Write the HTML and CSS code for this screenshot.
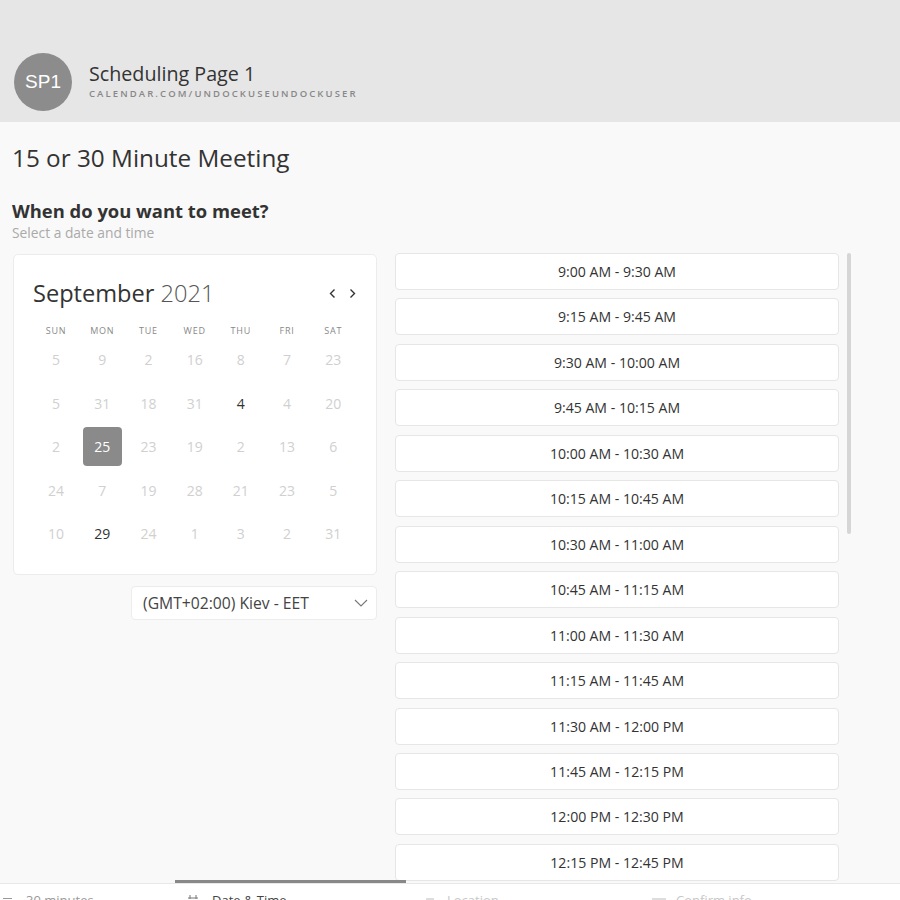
FILE: index.html
```html
<!DOCTYPE html>
<html>
<head>
<meta charset="utf-8">
<link rel="stylesheet" href="styles.css">
</head>
<body>
<div class="page">
  <header class="top">
    <div class="avatar">SP1</div>
    <div class="top-text">
      <div class="page-name">Scheduling Page 1</div>
      <div class="page-url">CALENDAR.COM/UNDOCKUSEUNDOCKUSER</div>
    </div>
  </header>
  <main class="main">
    <h1 class="title">15 or 30 Minute Meeting</h1>
    <h2 class="question">When do you want to meet?</h2>
    <div class="hint">Select a date and time</div>
    <div class="content">
      <div class="left">
        <div class="cal">
          <div class="cal-head">
            <div class="month">September <span class="year">2021</span></div>
            <div class="arrows">
              <svg width="9" height="11" viewBox="0 0 9 11"><path d="M6.5 1.5 L2.5 5.5 L6.5 9.5" fill="none" stroke="#333" stroke-width="1.4"/></svg>
              <svg width="9" height="11" viewBox="0 0 9 11"><path d="M2.5 1.5 L6.5 5.5 L2.5 9.5" fill="none" stroke="#333" stroke-width="1.4"/></svg>
            </div>
          </div>
          <div class="grid">
            <div class="wd">SUN</div><div class="wd">MON</div><div class="wd">TUE</div><div class="wd">WED</div><div class="wd">THU</div><div class="wd">FRI</div><div class="wd">SAT</div>
            <div class="d">5</div><div class="d">9</div><div class="d">2</div><div class="d">16</div><div class="d">8</div><div class="d">7</div><div class="d">23</div>
            <div class="d">5</div><div class="d">31</div><div class="d">18</div><div class="d">31</div><div class="d on">4</div><div class="d">4</div><div class="d">20</div>
            <div class="d">2</div><div class="d"><span class="sel">25</span></div><div class="d">23</div><div class="d">19</div><div class="d">2</div><div class="d">13</div><div class="d">6</div>
            <div class="d">24</div><div class="d">7</div><div class="d">19</div><div class="d">28</div><div class="d">21</div><div class="d">23</div><div class="d">5</div>
            <div class="d">10</div><div class="d on">29</div><div class="d">24</div><div class="d">1</div><div class="d">3</div><div class="d">2</div><div class="d">31</div>
          </div>
        </div>
        <div class="tz">
          <span>(GMT+02:00) Kiev - EET</span>
          <svg width="14" height="8" viewBox="0 0 14 8"><path d="M1 1 L7 7 L13 1" fill="none" stroke="#777" stroke-width="1.1"/></svg>
        </div>
      </div>
      <div class="slots">
        <div class="slot">9:00 AM - 9:30 AM</div>
        <div class="slot">9:15 AM - 9:45 AM</div>
        <div class="slot">9:30 AM - 10:00 AM</div>
        <div class="slot">9:45 AM - 10:15 AM</div>
        <div class="slot">10:00 AM - 10:30 AM</div>
        <div class="slot">10:15 AM - 10:45 AM</div>
        <div class="slot">10:30 AM - 11:00 AM</div>
        <div class="slot">10:45 AM - 11:15 AM</div>
        <div class="slot">11:00 AM - 11:30 AM</div>
        <div class="slot">11:15 AM - 11:45 AM</div>
        <div class="slot">11:30 AM - 12:00 PM</div>
        <div class="slot">11:45 AM - 12:15 PM</div>
        <div class="slot">12:00 PM - 12:30 PM</div>
        <div class="slot">12:15 PM - 12:45 PM</div>
      </div>
      <div class="scrollbar"></div>
    </div>
  </main>
  <footer class="tabs">
    <div class="progress"></div>
    <div class="tab t1">
      <svg width="9" height="8" viewBox="0 0 9 8"><path d="M0 3.5 H9" stroke="#999" stroke-width="1"/></svg>
      <span>30 minutes</span>
    </div>
    <div class="tab t2 cur">
      <svg width="12" height="10" viewBox="0 0 12 10"><path d="M1 3 H11 M3 0 V4 M9 0 V4" stroke="#777" stroke-width="1" fill="none"/></svg>
      <span>Date &amp; Time</span>
    </div>
    <div class="tab t3">
      <svg width="10" height="8" viewBox="0 0 10 8"><path d="M1 4 H9" stroke="#bbb" stroke-width="1"/></svg>
      <span>Location</span>
    </div>
    <div class="tab t4">
      <svg width="14" height="8" viewBox="0 0 14 8"><path d="M0 4 H14" stroke="#bbb" stroke-width="1"/></svg>
      <span>Confirm info</span>
    </div>
  </footer>
</div>
</body>
</html>
```

FILE: styles.css
```css
* { box-sizing: border-box; }
html, body { margin: 0; padding: 0; }
body {
  width: 900px;
  height: 900px;
  overflow: hidden;
  font-family: "Open Sans", "Liberation Sans", sans-serif;
  color: #333;
  background: #f9f9f9;
}
.page {
  height: 900px;
  display: flex;
  flex-direction: column;
}
.top {
  height: 122px;
  flex: none;
  background: #e6e6e6;
  display: flex;
  align-items: flex-start;
  padding: 53px 0 0 14px;
}
.avatar {
  width: 58px;
  height: 58px;
  border-radius: 50%;
  background: #8c8c8c;
  color: #fff;
  font-family: "Liberation Sans", Arial, sans-serif;
  font-size: 19px;
  display: flex;
  align-items: center;
  justify-content: center;
}
.top-text {
  margin-left: 17px;
  padding-top: 9px;
}
.page-name {
  font-size: 19.7px;
  line-height: 24px;
  color: #333;
}
.page-url {
  font-size: 9.5px;
  font-weight: 600;
  letter-spacing: 2.1px;
  color: #888;
  line-height: 14px;
  margin-top: 1px;
}
.main {
  flex: 1;
  overflow: hidden;
  padding: 0 0 0 12px;
}
.title {
  margin: 20px 0 0;
  font-size: 24.3px;
  line-height: 32px;
  font-weight: 400;
  color: #333;
}
.question {
  margin: 25px 0 0;
  font-size: 18.4px;
  line-height: 24px;
  font-weight: 700;
  color: #333;
}
.hint {
  font-size: 13.8px;
  line-height: 18px;
  color: #aaa;
  margin-top: 1px;
}
.content {
  display: flex;
  align-items: flex-start;
  margin-top: 11px;
}
.left {
  width: 364px;
  margin-left: 1px;
  display: flex;
  flex-direction: column;
  align-items: flex-end;
  padding-top: 1px;
}
.cal {
  width: 364px;
  height: 321px;
  background: #fff;
  border: 1px solid #ececec;
  border-radius: 5px;
  padding: 19px 19px 0 19px;
}
.cal-head {
  height: 38px;
  display: flex;
  align-items: center;
  justify-content: space-between;
}
.month {
  font-size: 23.6px;
  color: #333;
  line-height: 38px;
}
.year { color: #555; font-weight: 300; }
.arrows {
  display: flex;
  gap: 11px;
  margin-right: 0;
}
.grid {
  margin-top: 12px;
  display: grid;
  grid-template-columns: repeat(7, 46.2px);
  grid-auto-rows: 43.5px;
  grid-template-rows: 14px;
}
.wd {
  font-size: 9px;
  letter-spacing: 0.8px;
  color: #888;
  text-align: center;
  line-height: 14px;
}
.d {
  display: flex;
  align-items: center;
  justify-content: center;
  font-size: 14px;
  color: #d0d0d0;
}
.d.on { color: #333; }
.sel {
  width: 39px;
  height: 39px;
  border-radius: 4px;
  background: #8a8a8a;
  color: #fff;
  display: flex;
  align-items: center;
  justify-content: center;
}
.tz {
  margin-top: 11px;
  width: 246px;
  height: 34px;
  background: #fff;
  border: 1px solid #ececec;
  border-radius: 4px;
  display: flex;
  align-items: center;
  justify-content: space-between;
  padding: 0 8px 0 11px;
  font-size: 15.7px;
  color: #444;
}
.slots {
  margin-left: 18px;
  width: 444px;
  display: flex;
  flex-direction: column;
  gap: 8.46px;
}
.slot {
  height: 37px;
  flex: none;
  background: #fff;
  border: 1px solid #e6e6e6;
  border-radius: 4px;
  display: flex;
  align-items: center;
  justify-content: center;
  font-size: 14.1px;
  color: #333;
}
.scrollbar {
  margin-left: 8px;
  width: 4px;
  height: 281px;
  background: #d6d6d6;
  border-radius: 2px;
}
.tabs {
  flex: none;
  height: 17px;
  background: #fff;
  border-top: 1px solid #e8e8e8;
  position: relative;
  display: flex;
  font-size: 13px;
  line-height: 16px;
  color: #999;
  padding-top: 8px;
}
.progress {
  position: absolute;
  left: 175px;
  top: -4px;
  width: 231px;
  height: 3px;
  background: #888;
}
.tab {
  display: flex;
  align-items: flex-start;
  gap: 10px;
  white-space: nowrap;
}
.tab svg { margin-top: 3px; }
.t1 { width: 187px; padding-left: 3px; gap: 14px; }
.t2 { width: 235px; gap: 13px; }
.t3 { width: 230px; padding-left: 3px; gap: 12px; }
.cur { color: #444; }
.t3, .t4 { color: #c8c8c8; }
```
